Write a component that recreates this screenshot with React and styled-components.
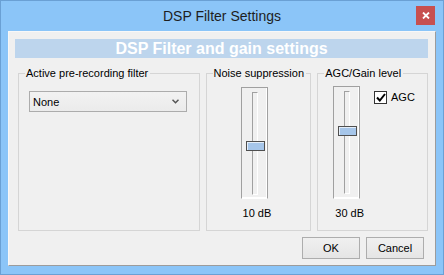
import React from "react";
import styled, { createGlobalStyle } from "styled-components";

const Global = createGlobalStyle`
  html, body { margin: 0; padding: 0; background: #8ac4f7; }
  * { box-sizing: border-box; }
`;

const Window = styled.div`
  width: 444px;
  height: 275px;
  background: #8bc5f8;
  border: 1px solid #6aa0d4;
  padding: 0 7px 8px 7px;
  display: flex;
  flex-direction: column;
  font-family: "Liberation Sans", Arial, sans-serif;
  font-size: 11px;
  color: #000;
`;

const TitleBar = styled.div`
  height: 30px;
  display: grid;
  grid-template-columns: 1fr auto 1fr;
  align-items: start;
`;

const Title = styled.div`
  grid-column: 2;
  margin-top: 7px;
  font-family: "Liberation Sans", Arial, sans-serif;
  font-size: 14px;
  color: #1e1e1e;
  line-height: 16px;
`;

const CloseButton = styled.div`
  grid-column: 3;
  justify-self: end;
  margin-top: 5px;
  margin-right: 1px;
  width: 19px;
  height: 19px;
  background: #c75050;
  display: flex;
  align-items: center;
  justify-content: center;
`;

const Client = styled.div`
  flex: 1;
  background: #f0f0f0;
  border-top: 1px solid #f8f8f8;
  border-left: 1px solid #f8f8f8;
  border-right: 1px solid #9c9c9c;
  border-bottom: 1px solid #9c9c9c;
  padding: 7px 7px 6px 6px;
  display: flex;
  flex-direction: column;
`;

const Banner = styled.div`
  height: 19px;
  background: #bdd5ed;
  color: #fff;
  font-weight: bold;
  font-size: 16px;
  line-height: 19px;
  text-align: center;
`;

const GroupRow = styled.div`
  margin-top: 9px;
  padding-left: 3px;
  display: flex;
  gap: ${(p) => p.$gap || 6}px;
  height: 164px;
`;

const Group = styled.fieldset`
  margin: 0;
  padding: 0;
  width: ${(p) => p.$w}px;
  border: 1px solid #d5d5d5;
  min-width: 0;
  display: flex;
  flex-direction: ${(p) => p.$dir || "column"};
  align-items: flex-start;
`;

const Legend = styled.legend`
  margin-left: 6px;
  padding: 0 2px 0 1px;
  line-height: 13px;
  font-size: 11px;
  color: #000;
`;

const Combo = styled.div`
  margin: 11px 0 0 10px;
  width: 158px;
  height: 21px;
  border: 1px solid #acacac;
  background: linear-gradient(#f2f2f2, #ebebeb);
  display: flex;
  align-items: center;
  justify-content: space-between;
  padding: 0 7px 0 3px;
  font-size: 11px;
`;

const SliderColumn = styled.div`
  margin: ${(p) => p.$top}px 0 0 ${(p) => p.$left}px;
  display: flex;
  flex-direction: column;
  align-items: flex-start;
`;

const SliderFrame = styled.div`
  position: relative;
  width: 27px;
  height: ${(p) => p.$h}px;
  border-top: 1px solid #a0a0a0;
  border-left: 1px solid #a0a0a0;
  border-right: 1px solid #a0a0a0;
  border-bottom: 1px solid #ffffff;
  box-shadow: inset -1px -1px 0 #fff;
  padding: 4px 0 0 10px;
`;

const Channel = styled.div`
  width: 6px;
  height: 103px;
  border-top: 1px solid #a0a0a0;
  border-left: 1px solid #a0a0a0;
  border-right: 1px solid #ffffff;
  border-bottom: 1px solid #ffffff;
  background: #f0f0f0;
`;

const Thumb = styled.div`
  position: absolute;
  left: 4px;
  width: 19px;
  height: 10px;
  border: 1px solid #4f4f4f;
  background: #a6c6ea;
  box-shadow: inset 1px 1px 0 #e4eef9;
`;

const Value = styled.div`
  margin: 8px 0 0 ${(p) => p.$left}px;
  font-size: 11px;
  line-height: 13px;
`;

const CheckRow = styled.label`
  margin: 11px 0 0 10px;
  display: flex;
  align-items: center;
  gap: 4px;
  font-size: 11px;
  line-height: 13px;
`;

const CheckBox = styled.div`
  width: 13px;
  height: 13px;
  border: 1px solid #333;
  background: #fff;
  display: flex;
  align-items: center;
  justify-content: center;
`;

const ButtonRow = styled.div`
  margin-top: 6px;
  padding-right: 4px;
  display: flex;
  justify-content: flex-end;
  gap: 6px;
`;

const Button = styled.div`
  width: 58px;
  height: 22px;
  border: 1px solid #adadad;
  background: linear-gradient(#f0f0f0, #e5e5e5);
  display: flex;
  align-items: center;
  justify-content: center;
  font-size: 11px;
`;

function Slider({ height, thumbTop }) {
  return (
    <SliderFrame $h={height}>
      <Channel />
      <Thumb style={{ top: thumbTop }} />
    </SliderFrame>
  );
}

export default function App() {
  return (
    <>
      <Global />
      <Window>
        <TitleBar>
          <Title>DSP Filter Settings</Title>
          <CloseButton>
            <svg width="8" height="7" viewBox="0 0 8 7">
              <path d="M1 0.5 L7 6.5 M7 0.5 L1 6.5" stroke="#fff" strokeWidth="1.8" />
            </svg>
          </CloseButton>
        </TitleBar>
        <Client>
          <Banner>DSP Filter and gain settings</Banner>
          <GroupRow $gap={6}>
            <Group $w={182}>
              <Legend>Active pre-recording filter</Legend>
              <Combo>
                <span>None</span>
                <svg width="7" height="5" viewBox="0 0 7 5">
                  <path d="M0.5 0.8 L3.5 3.8 L6.5 0.8" stroke="#555" strokeWidth="1.5" fill="none" />
                </svg>
              </Combo>
            </Group>
            <Group $w={106}>
              <Legend>Noise suppression</Legend>
              <SliderColumn $top={7} $left={34}>
                <Slider height={112} thumbTop={53} />
                <Value $left={2}>10 dB</Value>
              </SliderColumn>
            </Group>
            <Group $w={111} $dir="row">
              <Legend>AGC/Gain level</Legend>
              <SliderColumn $top={6} $left={15}>
                <Slider height={113} thumbTop={39} />
                <Value $left={2}>30 dB</Value>
              </SliderColumn>
              <CheckRow>
                <CheckBox>
                  <svg width="10" height="9" viewBox="0 0 10 9">
                    <path d="M1 4.5 L3.8 7.5 L9 1" stroke="#000" strokeWidth="2" fill="none" />
                  </svg>
                </CheckBox>
                AGC
              </CheckRow>
            </Group>
          </GroupRow>
          <ButtonRow>
            <Button>OK</Button>
            <Button>Cancel</Button>
          </ButtonRow>
        </Client>
      </Window>
    </>
  );
}
